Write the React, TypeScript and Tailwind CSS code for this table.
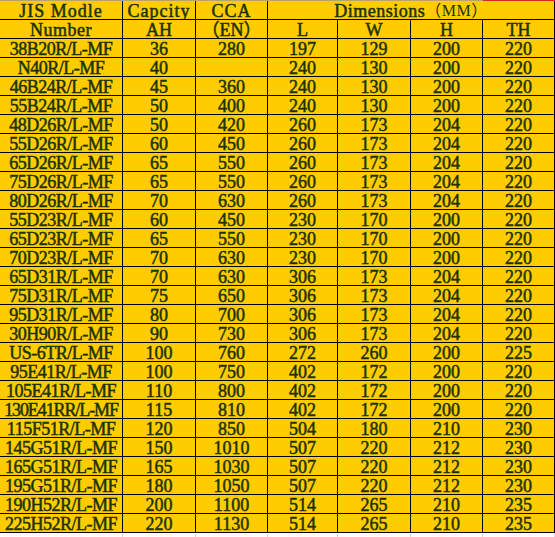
const rows: string[][] = [
  ["38B20R/L-MF", "36", "280", "197", "129", "200", "220"],
  ["N40R/L-MF", "40", "", "240", "130", "200", "220"],
  ["46B24R/L-MF", "45", "360", "240", "130", "200", "220"],
  ["55B24R/L-MF", "50", "400", "240", "130", "200", "220"],
  ["48D26R/L-MF", "50", "420", "260", "173", "204", "220"],
  ["55D26R/L-MF", "60", "450", "260", "173", "204", "220"],
  ["65D26R/L-MF", "65", "550", "260", "173", "204", "220"],
  ["75D26R/L-MF", "65", "550", "260", "173", "204", "220"],
  ["80D26R/L-MF", "70", "630", "260", "173", "204", "220"],
  ["55D23R/L-MF", "60", "450", "230", "170", "200", "220"],
  ["65D23R/L-MF", "65", "550", "230", "170", "200", "220"],
  ["70D23R/L-MF", "70", "630", "230", "170", "200", "220"],
  ["65D31R/L-MF", "70", "630", "306", "173", "204", "220"],
  ["75D31R/L-MF", "75", "650", "306", "173", "204", "220"],
  ["95D31R/L-MF", "80", "700", "306", "173", "204", "220"],
  ["30H90R/L-MF", "90", "730", "306", "173", "204", "220"],
  ["US-6TR/L-MF", "100", "760", "272", "260", "200", "225"],
  ["95E41R/L-MF", "100", "750", "402", "172", "200", "220"],
  ["105E41R/L-MF", "110", "800", "402", "172", "200", "220"],
  ["130E41RR/L-MF", "115", "810", "402", "172", "200", "220"],
  ["115F51R/L-MF", "120", "850", "504", "180", "210", "230"],
  ["145G51R/L-MF", "150", "1010", "507", "220", "212", "230"],
  ["165G51R/L-MF", "165", "1030", "507", "220", "212", "230"],
  ["195G51R/L-MF", "180", "1050", "507", "220", "212", "230"],
  ["190H52R/L-MF", "200", "1100", "514", "265", "210", "235"],
  ["225H52R/L-MF", "220", "1130", "514", "265", "210", "235"],
];

const cols = "grid grid-cols-[122px_72px_71px_69px_72px_71px_71px] gap-px";
const cell =
  "h-[18px] flex items-center justify-center bg-[#ffcc00] text-[#1c3300] whitespace-nowrap leading-none overflow-hidden pt-px";

export default function App() {
  return (
    <div className="w-[555px] h-[537px] bg-white font-['Liberation_Serif','Noto_Sans_CJK_SC',serif] text-[18px] font-normal [-webkit-text-stroke:0.5px_#1c3300]">
      <div className="flex h-px">
        <div className="w-[483px] bg-[#b4a66a]" />
        <div className="flex-1 bg-[#d42a1a]" />
      </div>
      <div className="border-r border-b border-black w-[555px]">
        <div className={`${cols} bg-black`}>
          <div className={`${cell} h-[17px] tracking-[1px]`}>JIS Modle</div>
          <div className={`${cell} h-[17px] tracking-[1px]`}>Capcity</div>
          <div className={`${cell} h-[17px] tracking-[1px]`}>CCA</div>
          <div className={`${cell} h-[17px] col-span-4 tracking-[0.5px]`}>
            Dimensions<span className="text-[16px] [-webkit-text-stroke:0px]">（MM）</span>
          </div>

          {["Number", "AH", "（EN）", "L", "W", "H", "TH"].map((h, i) => (
            <div key={i} className={`${cell} ${i === 0 ? "tracking-[0.5px]" : ""}`}>
              {h}
            </div>
          ))}

          {rows.map((r, ri) =>
            r.map((v, ci) => (
              <div
                key={`${ri}-${ci}`}
                className={`${cell} ${
                  ci === 0 ? (v.length > 12 ? "tracking-[-1.1px]" : "tracking-[-0.5px]") : ""
                }`}
              >
                {v}
              </div>
            ))
          )}
        </div>
      </div>
      <div className={`${cols} bg-[#d9d9d9] h-[5px]`}>
        {[0, 1, 2, 3, 4, 5, 6].map((i) => (
          <div key={i} className="bg-white" />
        ))}
      </div>
    </div>
  );
}
